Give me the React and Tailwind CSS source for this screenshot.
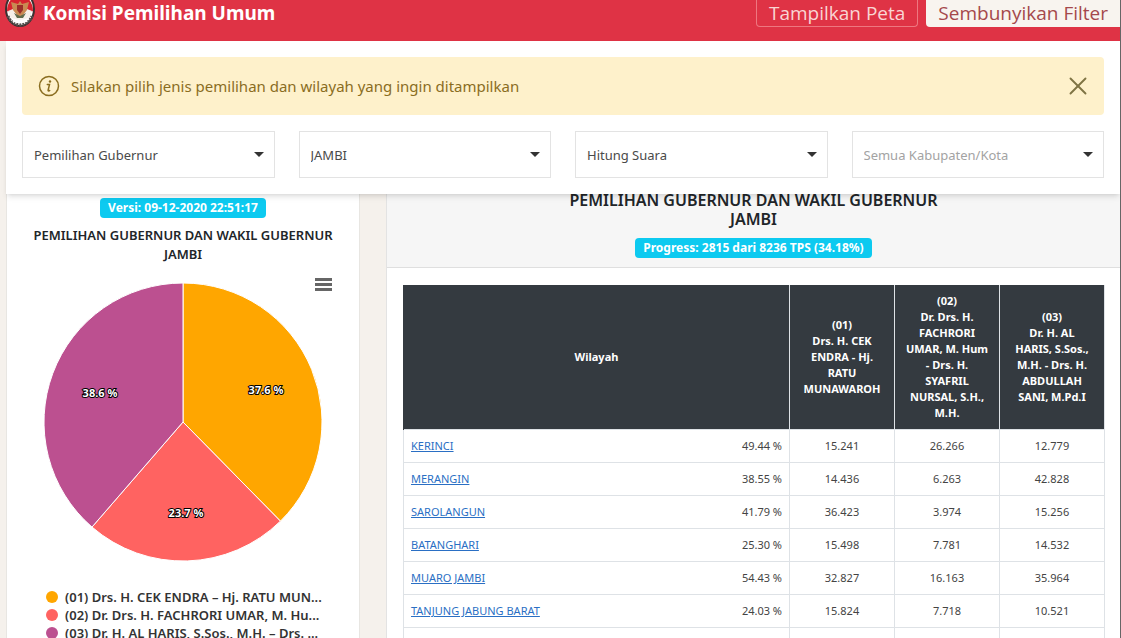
import { useState } from "react";
import { X } from "lucide-react";

const filters = [
    { id: "jenis", label: "Jenis pemilihan", value: "Pemilihan Gubernur" },
    { id: "wilayah", label: "Wilayah", value: "JAMBI" },
    { id: "tahap", label: "Tahap", value: "Hitung Suara" },
    { id: "kabupaten", label: "Kabupaten/Kota", value: "Semua Kabupaten/Kota", muted: true },
];

const slices = [
    { label: "(01) Drs. H. CEK ENDRA – Hj. RATU MUN...", value: 37.6, color: "#ffa600", x: 223, y: 107 },
    { label: "(02) Dr. Drs. H. FACHRORI UMAR, M. Hu...", value: 23.7, color: "#ff6361", x: 143, y: 230 },
    { label: "(03) Dr. H. AL HARIS, S.Sos., M.H. – Drs. ...", value: 38.6, color: "#bc5090", x: 57, y: 110 },
];

const candidates = [
    ["(01)", "Drs. H. CEK", "ENDRA - Hj.", "RATU", "MUNAWAROH"],
    ["(02)", "Dr. Drs. H.", "FACHRORI", "UMAR, M. Hum", "- Drs. H.", "SYAFRIL", "NURSAL, S.H.,", "M.H."],
    ["(03)", "Dr. H. AL", "HARIS, S.Sos.,", "M.H. - Drs. H.", "ABDULLAH", "SANI, M.Pd.I"],
];

const rows = [
    { name: "KERINCI", progress: "49.44 %", votes: ["15.241", "26.266", "12.779"] },
    { name: "MERANGIN", progress: "38.55 %", votes: ["14.436", "6.263", "42.828"] },
    { name: "SAROLANGUN", progress: "41.79 %", votes: ["36.423", "3.974", "15.256"] },
    { name: "BATANGHARI", progress: "25.30 %", votes: ["15.498", "7.781", "14.532"] },
    { name: "MUARO JAMBI", progress: "54.43 %", votes: ["32.827", "16.163", "35.964"] },
    { name: "TANJUNG JABUNG BARAT", progress: "24.03 %", votes: ["15.824", "7.718", "10.521"] },
];

function Logo() {
    return (
        <svg viewBox="0 0 30 36" className="w-[30px] h-9 shrink-0" aria-hidden="true">
            <ellipse cx="15" cy="18" rx="14" ry="17" fill="#fff" stroke="#3a3030" strokeWidth="2" />
            <path d="M2 20a13 16 0 0 1 26 0l-4 2H6z" fill="#d8232f" />
            <path d="M3 20l5-2 4 5h6l4-5 5 2-2 6-6 3h-8l-6-3z" fill="#f5efe9" />
            <path d="M15 10l2 3 7-2-2 8-4 5-3 3-3-3-4-5-2-8 7 2z" fill="#c98a52" />
            <path d="M12 14h6v5l-3 4-3-4z" fill="#9c2f2a" />
            <path d="M9 22l6 3 6-3-3 5h-6z" fill="#5f6b4c" />
            <path d="M3 25q3 8 12 9 9-1 12-9" fill="none" stroke="#55504e" strokeWidth="3" strokeDasharray="2 1" />
            <path d="M8 29q7 3 14 0" fill="none" stroke="#fff" strokeWidth="3" />
        </svg>
    );
}

function InfoIcon() {
    return (
        <svg viewBox="0 0 22 22" className="w-[22px] h-[22px] shrink-0" fill="none" stroke="currentColor" aria-hidden="true">
            <circle cx="11" cy="11" r="9.5" strokeWidth="1.5" />
            <circle cx="12" cy="6.5" r="1.2" fill="currentColor" stroke="none" />
            <path d="M9.3 9.6h2.2l-1.4 5.6q-.1.8.6.7l1-.4" strokeWidth="1.5" strokeLinecap="round" />
        </svg>
    );
}

function Filter({ filter }) {
    return (
        <div className="relative">
            <select
                id={filter.id}
                aria-label={filter.label}
                className={`w-full h-[47px] px-[11px] pt-[2px] appearance-none rounded-none border border-[#e3e3e3] bg-white text-[13px] ${
                    filter.muted ? "text-[#a3a3a3]" : "text-[#4a4a4a]"
                }`}
            >
                <option>{filter.value}</option>
            </select>
            <svg viewBox="0 0 10 5" className="absolute right-[11px] top-[21px] w-[10px] h-[5px] pointer-events-none" aria-hidden="true">
                <path d="M0 0h10L5 5z" fill="#333" />
            </svg>
        </div>
    );
}

function PieChart() {
    const total = slices.reduce((sum, s) => sum + s.value, 0);
    const point = (share) => {
        const angle = share * 2 * Math.PI;
        return `${140 + 139 * Math.sin(angle)} ${140 - 139 * Math.cos(angle)}`;
    };
    let start = 0;

    return (
        <svg viewBox="0 0 280 280" className="w-[280px] h-[280px]" role="img" aria-label="Perolehan suara">
            {slices.map((s) => {
                const end = start + s.value / total;
                const d = `M140 140L${point(start)}A139 139 0 0 1 ${point(end)}Z`;
                start = end;
                return <path key={s.color} d={d} fill={s.color} stroke="#fff" strokeWidth="1" />;
            })}
            {slices.map((s) => (
                <text
                    key={s.color}
                    x={s.x}
                    y={s.y}
                    textAnchor="middle"
                    dominantBaseline="central"
                    className="text-[11px] font-bold fill-white stroke-black [paint-order:stroke] stroke-2"
                >
                    {s.value} %
                </text>
            ))}
        </svg>
    );
}

export default function App() {
    const [showAlert, setShowAlert] = useState(true);

    return (
        <div className="h-screen overflow-hidden flex flex-col bg-[#f5f1ec] border-r border-[#666] font-['Noto_Sans','Open_Sans',sans-serif] text-[#212529]">
            <header className="h-[41px] shrink-0 overflow-hidden flex items-end gap-2 pl-[5px] bg-[#df3345]">
                <div className="flex-1 flex items-end gap-2 pb-[14px]">
                    <Logo />
                    <h1 className="text-[19px] leading-7 font-bold text-white">Komisi Pemilihan Umum</h1>
                </div>
                <button className="h-7 mb-[14px] px-3 rounded-b border border-t-0 border-[#ee7780] font-['Open_Sans',sans-serif] text-[19px] leading-7 text-[#f9d5d3]">
                    Tampilkan Peta
                </button>
                <button className="h-7 mb-[14px] px-3 rounded-bl bg-[#f8f4ef] font-['Open_Sans',sans-serif] text-[19px] leading-7 text-[#a5484b]">
                    Sembunyikan Filter
                </button>
            </header>

            <section className="relative z-10 shrink-0 ml-[6px] p-4 flex flex-col gap-4 bg-white shadow-md">
                {showAlert && (
                    <div role="alert" className="h-[58px] pl-4 pr-[11px] flex items-center gap-[11px] rounded-sm bg-[#fef1cb] text-[#8a6d1f]">
                        <InfoIcon />
                        <p className="flex-1 text-[15px]">Silakan pilih jenis pemilihan dan wilayah yang ingin ditampilkan</p>
                        <button aria-label="Tutup" onClick={() => setShowAlert(false)} className="text-[#7f7444]">
                            <X size={30} strokeWidth={1.5} />
                        </button>
                    </div>
                )}
                <div className="grid grid-cols-4 gap-6">
                    {filters.map((f) => (
                        <Filter key={f.id} filter={f} />
                    ))}
                </div>
            </section>

            <main className="flex-1 min-h-0 flex items-stretch gap-[26px] pl-[6px]">
                <aside className="w-[354px] shrink-0 pt-1 flex flex-col items-center bg-white border-x border-[#e8e6e2]">
                    <span className="h-5 px-2 rounded bg-[#0dcaf0] text-[12px] leading-5 font-bold text-white">
                        Versi: 09-12-2020 22:51:17
                    </span>
                    <h2 className="mt-2 text-[13px] leading-[19px] font-semibold text-center">
                        PEMILIHAN GUBERNUR DAN WAKIL GUBERNUR
                        <br />
                        JAMBI
                    </h2>
                    <div className="relative mt-[18px]">
                        <PieChart />
                        <button aria-label="Menu grafik" className="absolute -right-[9px] -top-1 w-[17px] flex flex-col gap-[2px]">
                            <span className="h-[3px] w-full bg-[#666]" />
                            <span className="h-[3px] w-full bg-[#666]" />
                            <span className="h-[3px] w-full bg-[#666]" />
                        </button>
                    </div>
                    <ul className="mt-[26px] w-[274px] text-[13px] leading-[18px] font-semibold text-[#333]">
                        {slices.map((s) => (
                            <li key={s.color} className="flex items-center gap-[7px] whitespace-nowrap">
                                <span className="w-3 h-3 shrink-0 rounded-full" style={{ backgroundColor: s.color }} />
                                {s.label}
                            </li>
                        ))}
                    </ul>
                </aside>

                <section className="flex-1 min-w-0 bg-white border-l border-[#e3e3e3]">
                    <div className="-mt-1 pt-px h-[78px] flex flex-col items-center bg-[#f6f6f6] border-b border-[#dfdfdf]">
                        <h2 className="text-[16px] leading-[19px] font-semibold text-center">
                            PEMILIHAN GUBERNUR DAN WAKIL GUBERNUR
                            <br />
                            JAMBI
                        </h2>
                        <span className="mt-[9px] h-5 px-2 rounded bg-[#0dcaf0] text-[12px] leading-5 font-bold text-white">
                            Progress: 2815 dari 8236 TPS (34.18%)
                        </span>
                    </div>
                    <div className="pl-4 pr-[15px] pt-[17px]">
                        <table className="w-full table-fixed border-collapse text-[11px] leading-4">
                            <thead>
                                <tr className="bg-[#343a40] text-white">
                                    <th className="p-2 border-x border-l-[#343a40] border-r-[#dee2e6]">Wilayah</th>
                                    {candidates.map((lines) => (
                                        <th key={lines[0]} className="w-[105px] py-2 border-r border-[#dee2e6] whitespace-pre-line">
                                            {lines.join("\n")}
                                        </th>
                                    ))}
                                </tr>
                            </thead>
                            <tbody className="text-[#444]">
                                {rows.map((row) => (
                                    <tr key={row.name}>
                                        <td className="px-[7px] py-2 border border-[#dee2e6]">
                                            <div className="flex justify-between">
                                                <a href="#" className="text-[#2a6fc4] underline">{row.name}</a>
                                                <span>{row.progress}</span>
                                            </div>
                                        </td>
                                        {row.votes.map((vote, i) => (
                                            <td key={i} className="p-2 border border-[#dee2e6] text-center">{vote}</td>
                                        ))}
                                    </tr>
                                ))}
                                <tr>
                                    <td className="h-[33px] border border-[#dee2e6]" />
                                    <td className="border border-[#dee2e6]" />
                                    <td className="border border-[#dee2e6]" />
                                    <td className="border border-[#dee2e6]" />
                                </tr>
                            </tbody>
                        </table>
                    </div>
                </section>
            </main>
        </div>
    );
}
